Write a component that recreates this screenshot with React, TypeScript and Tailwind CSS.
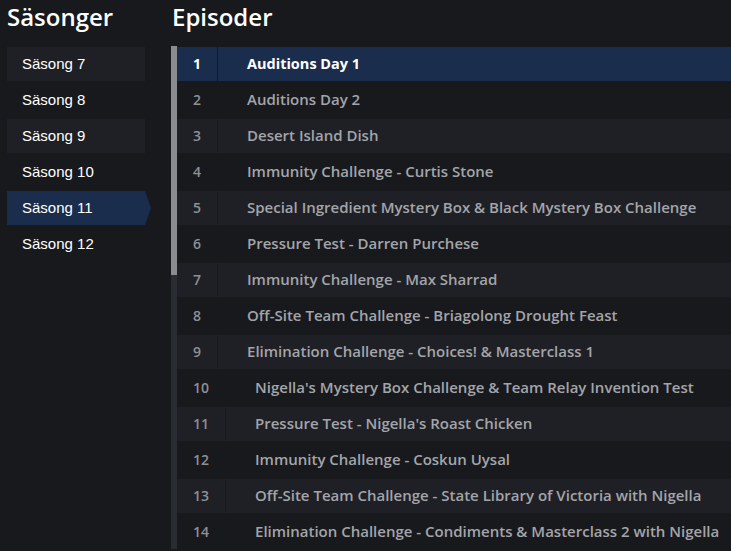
const seasons = [7, 8, 9, 10, 11, 12];
const selectedSeason = 11;

const episodes = [
  "Auditions Day 1",
  "Auditions Day 2",
  "Desert Island Dish",
  "Immunity Challenge - Curtis Stone",
  "Special Ingredient Mystery Box & Black Mystery Box Challenge",
  "Pressure Test - Darren Purchese",
  "Immunity Challenge - Max Sharrad",
  "Off-Site Team Challenge - Briagolong Drought Feast",
  "Elimination Challenge - Choices! & Masterclass 1",
  "Nigella's Mystery Box Challenge & Team Relay Invention Test",
  "Pressure Test - Nigella's Roast Chicken",
  "Immunity Challenge - Coskun Uysal",
  "Off-Site Team Challenge - State Library of Victoria with Nigella",
  "Elimination Challenge - Condiments & Masterclass 2 with Nigella",
];

export default function App() {
  return (
    <div className="flex h-[551px] w-[731px] overflow-hidden bg-[#18191d] font-['Open_Sans',sans-serif]">
      <div className="w-[171px] shrink-0 pl-[7px]">
        <h2 className="h-[47px] overflow-hidden pt-[2px] text-[24px] leading-[30px] font-semibold text-white">Säsonger</h2>
        <ul className="flex flex-col gap-[2px] font-['Liberation_Sans',Arial,sans-serif] text-[15px] text-white">
          {seasons.map((s, i) =>
            s === selectedSeason ? (
              <li
                key={s}
                className="flex h-[34px] w-[144px] items-center bg-[#1b2d4d] pl-[15px] [clip-path:polygon(0_0,calc(100%-6px)_0,100%_50%,calc(100%-6px)_100%,0_100%)]"
              >
                Säsong {s}
              </li>
            ) : (
              <li key={s} className={`flex h-[34px] w-[138px] items-center pl-[15px] ${i % 2 === 0 ? "bg-[#1f2025]" : ""}`}>
                Säsong {s}
              </li>
            )
          )}
        </ul>
      </div>
      <div className="min-w-0 flex-1">
        <h2 className="h-[46px] overflow-hidden pl-px pt-[2px] text-[24px] leading-[30px] font-semibold text-white">Episoder</h2>
        <div className="flex">
          <div className="w-[6px] shrink-0 bg-[#2a2c33]">
            <div className="h-[229px] bg-[#8b8c90]" />
          </div>
          <ul className="flex min-w-0 flex-1 flex-col gap-[2px] pt-px">
            {episodes.map((title, i) => {
              const selected = i === 0;
              const bg = selected ? "bg-[#1b2d4d]" : i % 2 === 0 ? "bg-[#1f2025]" : "";
              return (
                <li key={title} className={`flex h-[34px] items-stretch whitespace-nowrap ${bg}`}>
                  <span
                    className={`flex items-center border-r border-[#18191d] px-4 pb-px text-[14px] ${selected ? "font-bold text-white" : "font-semibold text-[#8e9095]"}`}
                  >
                    {i + 1}
                  </span>
                  <span
                    className={`flex items-center pb-px pl-[29px] ${selected ? "text-[14.5px] font-bold text-white" : "text-[15px] font-semibold text-[#a3a5aa]"}`}
                  >
                    {title}
                  </span>
                </li>
              );
            })}
          </ul>
        </div>
      </div>
    </div>
  );
}
